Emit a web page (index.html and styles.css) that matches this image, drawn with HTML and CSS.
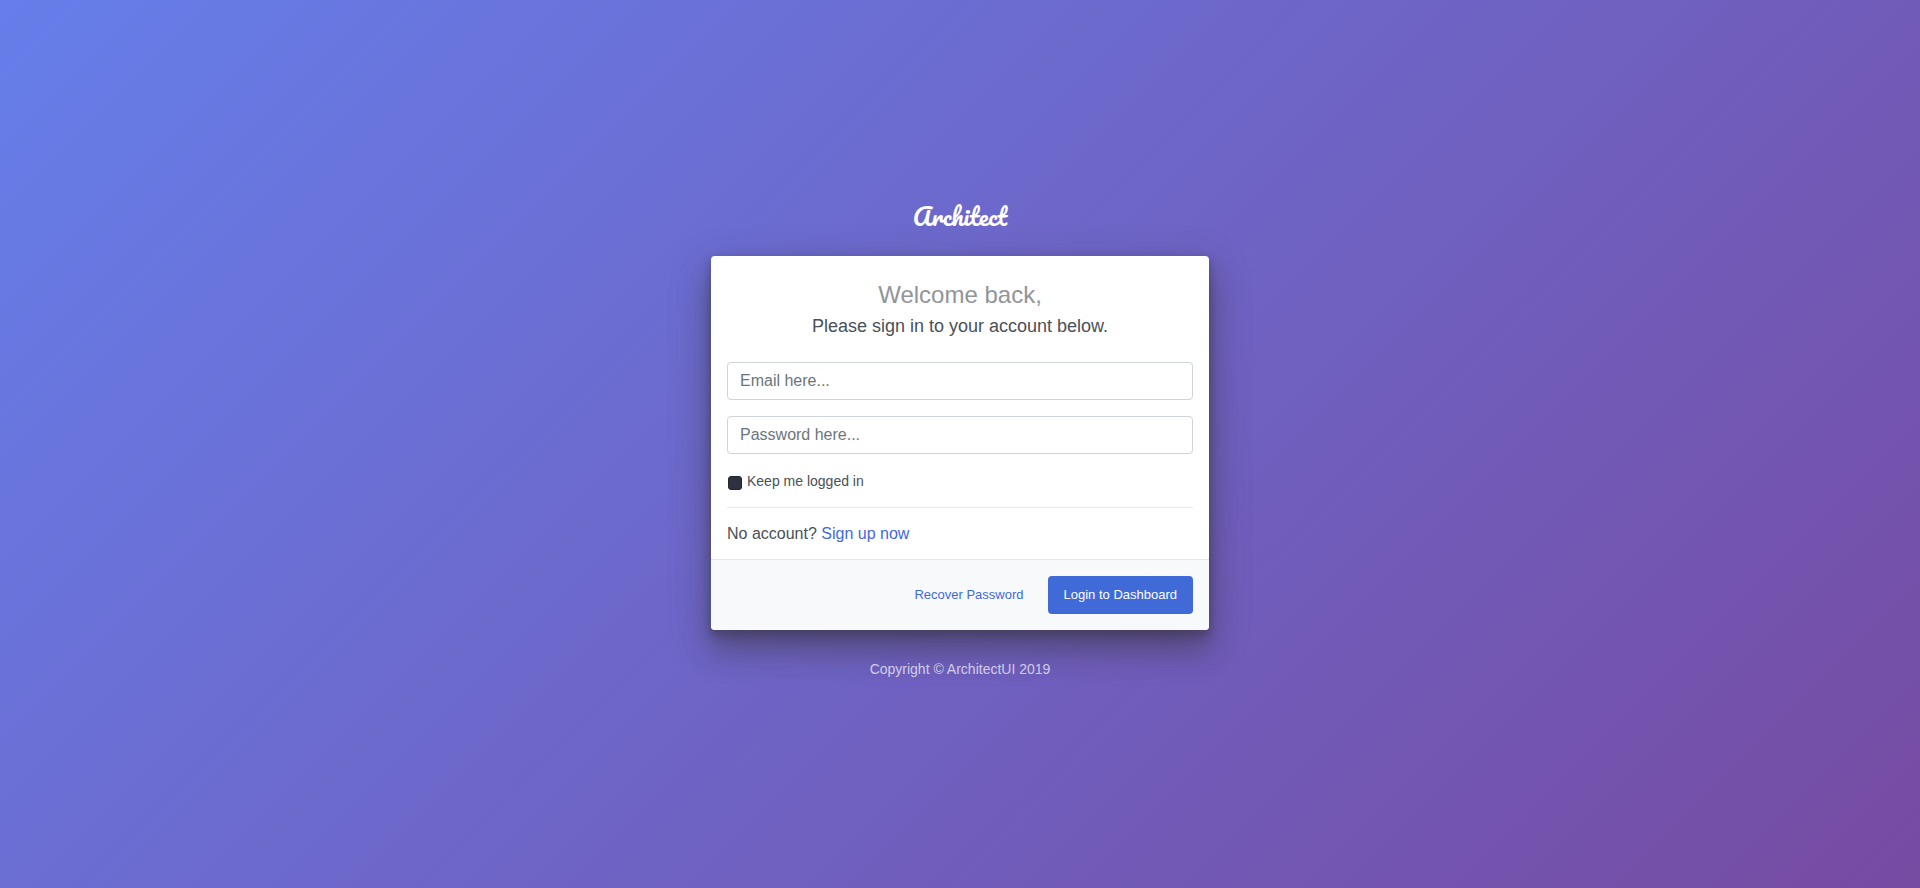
FILE: index.html
```html
<!DOCTYPE html>
<html lang="en">
<head>
<meta charset="utf-8">
<meta name="viewport" content="width=device-width, initial-scale=1">
<title>Login - Architect</title>
<link rel="stylesheet" href="styles.css">
</head>
<body>
<main class="login-page">
  <div class="brand">Architect</div>
  <form class="card">
    <div class="card-body">
      <h1 class="welcome">Welcome back,<span class="subtitle">Please sign in to your account below.</span></h1>
      <input class="field" type="email" placeholder="Email here..." aria-label="Email">
      <input class="field" type="password" placeholder="Password here..." aria-label="Password">
      <div class="check">
        <input class="check-input" type="checkbox" id="keep">
        <label for="keep">Keep me logged in</label>
      </div>
      <hr class="divider">
      <p class="signup">No account? <a class="link" href="#">Sign up now</a></p>
    </div>
    <div class="card-footer">
      <a class="btn btn-link" href="#">Recover Password</a>
      <button class="btn btn-primary" type="button">Login to Dashboard</button>
    </div>
  </form>
  <footer class="copyright">Copyright © ArchitectUI 2019</footer>
</main>
</body>
</html>
```
FILE: styles.css
```css
* {
  box-sizing: border-box;
}

body {
  margin: 0;
  font-family: "Liberation Sans", Arial, sans-serif;
  font-size: 14px;
  line-height: 21px;
  color: #495057;
}

.login-page {
  min-height: 100vh;
  padding: 16px;
  display: flex;
  flex-direction: column;
  align-items: center;
  justify-content: center;
  background: linear-gradient(135deg, #667eea 0%, #764ba2 100%);
}

.brand {
  margin-bottom: 19px;
  font-family: Pacifico, cursive;
  font-size: 24px;
  font-weight: 400;
  line-height: 40px;
  color: #fff;
}

.card {
  width: 100%;
  max-width: 500px;
  border: 1px solid transparent;
  border-radius: 5px;
  background: #fff;
  background-clip: padding-box;
  box-shadow: 0 12px 40px rgba(52, 50, 52, .3), 0 21px 27px rgba(52, 50, 52, .3), 0 9px 9px rgba(0, 0, 0, .05), 0 4px 7px rgba(52, 50, 52, .3);
}

.card-body {
  padding: 16px;
}

.welcome {
  margin: 8px 0 24px;
  font-size: 24px;
  font-weight: 400;
  line-height: 29px;
  text-align: center;
  color: #919599;
}

.subtitle {
  display: block;
  margin-top: 5px;
  font-size: 18px;
  line-height: 24px;
  color: #495057;
}

.field {
  display: block;
  width: 100%;
  height: 38px;
  margin-bottom: 16px;
  padding: 6px 12px;
  border: 1px solid #ced4da;
  border-radius: 4px;
  background: #fff;
  font: inherit;
  font-size: 16px;
  color: #495057;
}

.field::placeholder {
  color: #6c757d;
  opacity: 1;
}

.check {
  display: flex;
  align-items: center;
  gap: 5px;
  line-height: 22px;
}

.check-input {
  appearance: none;
  width: 14px;
  height: 14px;
  margin: 4px 0 0 1px;
  border: 1px solid #23262f;
  border-radius: 3px;
  background: #2e323e;
}

.divider {
  margin: 15px 0 16px;
  border: 0;
  border-top: 1px solid #e9e9e9;
}

.signup {
  margin: 0;
  font-size: 16px;
  line-height: 19px;
}

.link {
  color: #3f6ad8;
  text-decoration: none;
}

.card-footer {
  display: flex;
  justify-content: flex-end;
  gap: 8px;
  padding: 16px;
  border-top: 1px solid #e6e7e8;
  border-radius: 0 0 4px 4px;
  background: #f8f9fb;
}

.btn {
  padding: 8px 15px;
  border: 1px solid transparent;
  border-radius: 4px;
  font: inherit;
  font-size: 13px;
  line-height: 20px;
  text-decoration: none;
}

.btn-link {
  color: #3f6ad8;
}

.btn-primary {
  background: #3f6ad8;
  background-clip: border-box;
  color: #fff;
}

.copyright {
  margin: 28px 0 12px;
  color: rgba(255, 255, 255, .7);
}
```
